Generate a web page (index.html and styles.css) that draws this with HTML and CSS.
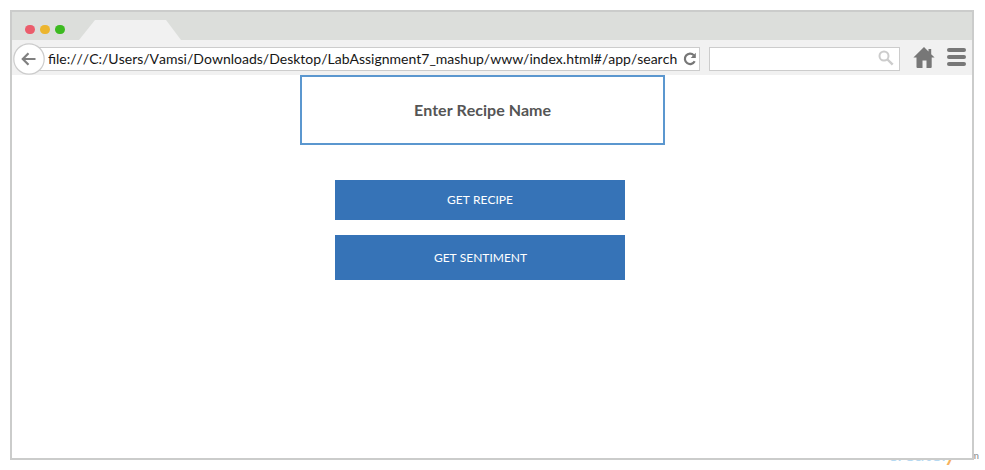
FILE: index.html
```
<!DOCTYPE html>
<html lang="en">
<head>
<meta charset="utf-8">
<title>Recipe search</title>
<link rel="stylesheet" href="styles.css">
</head>
<body>
<div class="watermark"><span class="brand">createl<span class="tail">y</span></span><span class="suffix">.com</span></div>
<div class="browser">
  <div class="tabs">
    <div class="lights"><i class="red"></i><i class="yellow"></i><i class="green"></i></div>
    <div class="tab"></div>
  </div>
  <div class="toolbar">
    <svg class="back" viewBox="0 0 32 32"><circle cx="16" cy="16" r="15.2" fill="#fff" stroke="#ccc" stroke-width="1.2"/><path d="M15.500 10.300 9.800 16l5.700 5.700M10 16h12.500" fill="none" stroke="#808080" stroke-width="2.200"/></svg>
    <div class="address">
      <span class="url">file:///C:/Users/Vamsi/Downloads/Desktop/LabAssignment7_mashup/www/index.html#/app/search</span>
      <svg class="reload" viewBox="0 0 14 14"><path d="M10.800 3.200A5.200 5.200 0 1 0 11.700 9.300" fill="none" stroke="#777" stroke-width="2.200"/><path d="M12.800.8v5.200H7.700z" fill="#777"/></svg>
    </div>
    <div class="search"><svg class="lens" viewBox="0 0 16 16"><circle cx="6" cy="6" r="4.500" fill="none" stroke="#ccc" stroke-width="2"/><path d="m9.500 9.500 5.200 5.200" stroke="#ccc" stroke-width="2.400"/></svg></div>
    <svg class="home" viewBox="0 0 22 22"><path d="M11 0 15.500 4.500V2h2.700v5.200L21.600 10.500H18.700V20q0 1-1 1h-4.200V13.500H9.500V21H4.500q-1 0-1-1V10.500H.4z" fill="#777"/></svg>
    <div class="menu"><i></i><i></i><i></i></div>
  </div>
  <main class="page">
    <div class="field">Enter Recipe Name</div>
    <div class="button">GET RECIPE</div>
    <div class="button tall">GET SENTIMENT</div>
  </main>
</div>
</body>
</html>
```
FILE: styles.css
```
* { box-sizing: border-box; }
body { margin: 0; padding: 10px; height: 470px; overflow: hidden; background: #fff; font-family: Lato, sans-serif; font-kerning: none; }
.browser { position: relative; width: 964px; height: 450px; border: 2px solid #cbcccb; background: #fff; }
.tabs { display: flex; height: 28px; background: #dcdedb; }
.lights { display: flex; gap: 5.500px; width: 67px; padding: 12.500px 0 0 13.300px; }
.lights i { width: 9.500px; height: 9.500px; border-radius: 50%; }
.red { background: #eb5d6c; }
.yellow { background: #ecb52e; }
.green { background: #3cba20; }
.tab { width: 103px; height: 20px; margin-top: 8px; background: #f1f1f1; clip-path: polygon(16px 0, 87px 0, 102px 100%, 0 100%); }
.toolbar { display: flex; height: 35px; background: #f1f1f1; }
.back { flex: none; width: 32px; height: 32px; margin: 3px 0 0 1px; z-index: 1; }
.address { display: flex; width: 672px; height: 24px; margin: 7px 0 0 -17px; border: 1px solid #ccc; background: #fff; }
.url { width: 636px; padding-left: 19px; font-size: 14px; line-height: 22px; white-space: nowrap; color: #161616; }
.reload { flex: none; width: 14px; height: 14px; margin: 4px 0 0 18px; }
.search { width: 191px; height: 24px; margin: 7px 0 0 9px; border: 1px solid #ccc; background: #fff; }
.lens { display: block; width: 16px; height: 16px; margin: 2px 0 0 168px; }
.home { width: 22px; height: 22px; margin: 7px 0 0 13px; }
.menu { display: flex; flex-direction: column; gap: 3px; width: 19px; margin: 8px 0 0 12px; }
.menu i { height: 4px; border-radius: 2px; background: #777; }
.page { display: flex; flex-direction: column; align-items: flex-start; }
.field { width: 365px; height: 70px; margin: 0 0 35px 288px; border: 2px solid #5b97cf; font-size: 16px; font-weight: 700; line-height: 66px; text-align: center; color: #555; }
.button { width: 290px; height: 40px; margin: 0 0 15px 323px; background: #3673b7; font-size: 12px; line-height: 39px; text-align: center; color: #fff; }
.tall { height: 45px; padding-left: 1px; line-height: 45px; }
.watermark { position: absolute; left: 888px; top: 439px; display: flex; align-items: flex-start; white-space: nowrap; }
.brand { width: 70px; font-size: 20px; line-height: 28px; letter-spacing: -.3px; color: #b5d9f2; }
.tail { font-weight: 700; font-style: italic; color: #f7b15c; }
.suffix { font-size: 10px; line-height: 32px; color: #888; }
```
